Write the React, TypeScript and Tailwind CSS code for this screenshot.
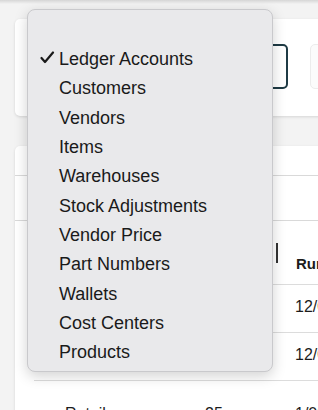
import React from 'react';

const menuItems = [
  'Ledger Accounts',
  'Customers',
  'Vendors',
  'Items',
  'Warehouses',
  'Stock Adjustments',
  'Vendor Price',
  'Part Numbers',
  'Wallets',
  'Cost Centers',
  'Products',
];

const rows = [
  { name: 'Office Supplies', qty: '10', date: '12/04/2024' },
  { name: 'Shipping', qty: '4', date: '12/06/2024' },
  { name: 'Retail', qty: '25', date: '1/02/2025' },
];

const App: React.FC = () => {
  const selected = 'Ledger Accounts';

  return (
    <div className="relative w-[318px] h-[410px] overflow-hidden bg-[#f3f3f3] font-['Liberation_Sans',Arial,sans-serif] text-[#1c1c1c]">
      <div className="h-[4px] bg-gradient-to-b from-[#d6d6d6] to-[#f3f3f3]" />

      <div className="pl-[15px] pt-[15px]">
        {/* filter card */}
        <div className="w-[360px] h-[97px] bg-white rounded-l-[5px] shadow-[0_1px_3px_rgba(0,0,0,0.12)] flex items-start pt-[25px] pl-[15px] gap-[22px]">
          <div className="w-[258px] h-[45px] border-2 border-[#1e3a44] rounded-[5px] flex items-center px-3 text-[16px]">
            Ledger Accounts
          </div>
          <div className="w-[60px] h-[45px] border border-[#ececec] rounded-[5px] bg-[#fbfbfb]" />
        </div>

        {/* table card */}
        <div className="mt-[30px] w-[360px] h-[300px] bg-white rounded-l-[5px] shadow-[0_1px_3px_rgba(0,0,0,0.12)]">
          <div className="h-[30px] border-b border-[#d9d9d9] flex items-center px-5 text-[15px] font-bold">
            Accounts
          </div>
          <div className="h-[45px] border-b border-[#d9d9d9] flex items-center px-5 text-[15px]">
            Search
          </div>
          <div className="pl-[19px] pt-[24px]">
            <div className="grid grid-cols-[146px_96px_1fr] h-[40px] border-b border-[#dcdcdc] items-center text-[15px] font-bold">
              <div className="pl-[31px]">Name</div>
              <div className="pl-[25px]">Qty</div>
              <div className="relative pl-[20px]">
                <span className="absolute left-0 top-[-10px] h-[20px] w-[2px] bg-[#333]" />
                Run Date
              </div>
            </div>
            {rows.map((r, i) => (
              <div
                key={r.name}
                className={`grid grid-cols-[146px_96px_1fr] h-[48px] items-start text-[16px] ${i < 2 ? 'pt-[10px] border-b border-[#dcdcdc]' : 'pt-[21px]'}`}
              >
                <div className="pl-[31px]">{r.name}</div>
                <div className="pl-[25px]">{r.qty}</div>
                <div className="pl-[19px]">{r.date}</div>
              </div>
            ))}
          </div>
        </div>
      </div>

      {/* popup menu */}
      <div className="absolute left-[27px] top-[9px] w-[246px] h-[363px] bg-[#e9e9eb] rounded-[8px] border border-[#c9c9cc] shadow-[0_4px_14px_rgba(0,0,0,0.18)] pt-[35px]">
        {menuItems.map((item) => (
          <div key={item} className="relative h-[29.3px] flex items-center pl-[31px] text-[18px] text-[#1a1a1a]">
            {item === selected && (
              <svg
                className="absolute left-[12px] top-[6px]"
                width="15"
                height="13"
                viewBox="0 0 15 13"
                fill="none"
              >
                <path d="M1.5 7 L5 11 L13 1.5" stroke="#1a1a1a" strokeWidth="2.2" strokeLinecap="round" strokeLinejoin="round" />
              </svg>
            )}
            {item}
          </div>
        ))}
      </div>
    </div>
  );
};

export default App;
